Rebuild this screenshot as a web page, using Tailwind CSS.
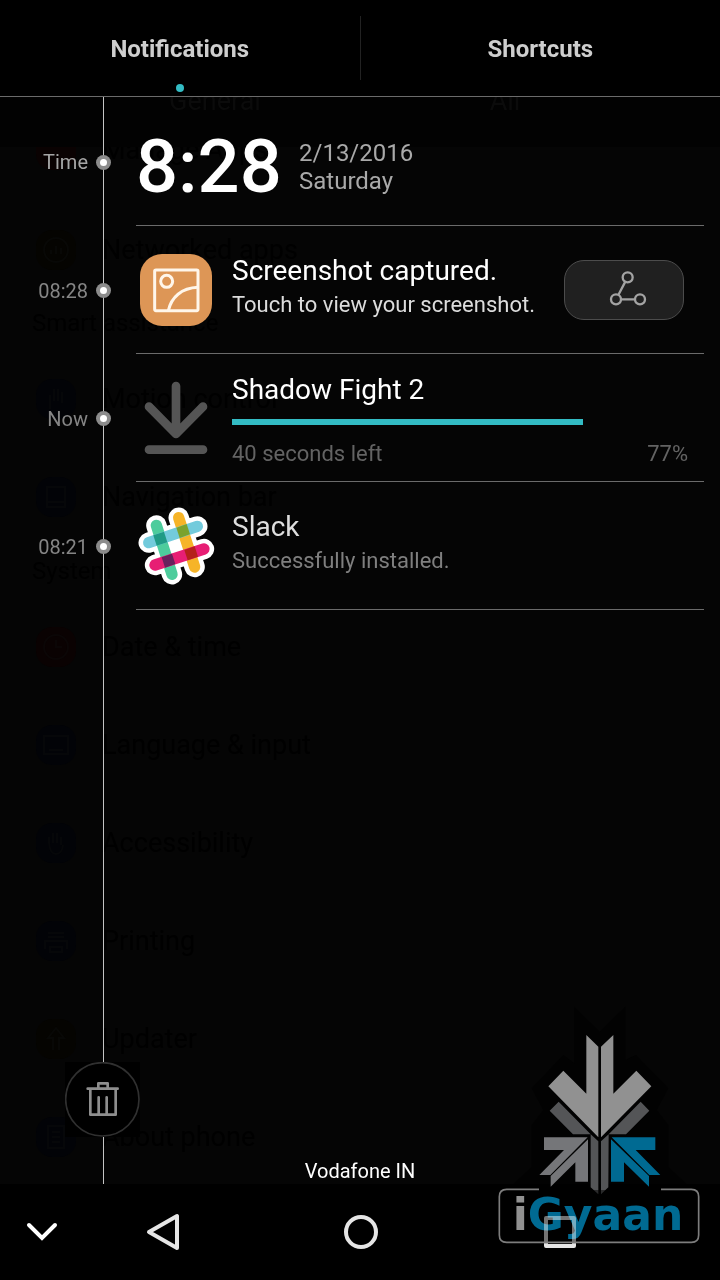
<!DOCTYPE html>
<html lang="en">
<head>
  <meta charset="UTF-8" />
  <meta name="viewport" content="width=device-width, initial-scale=1.0"/>
  <title>Notifications</title>
  <script src="https://cdn.jsdelivr.net/npm/@tailwindcss/browser@4"></script>
</head>
<body class="bg-black font-[Roboto,sans-serif] text-white">
  <div class="relative flex min-h-screen flex-col overflow-hidden">

    <!-- Tabs -->
    <header class="flex h-[97px] border-b border-[#6b6b6b] text-2xl font-bold text-[#cecece]">
      <button type="button" class="relative flex-1 pt-0.5 text-center">
        Notifications
        <span class="absolute bottom-1 left-1/2 size-2 -translate-x-1/2 rounded-full bg-[#33bcc4]"></span>
      </button>
      <div class="my-4 w-px bg-[#222]"></div>
      <button type="button" class="flex-1 pt-0.5 text-center">Shortcuts</button>
    </header>

    <main class="relative flex flex-1 flex-col bg-[#050505]">

      <!-- Dimmed settings list behind the shade -->
      <div class="absolute inset-0 overflow-hidden text-[27px] text-black" aria-hidden="true">
        <div class="flex h-[50px] items-end overflow-hidden bg-[#020202] text-[#0b0b0b]">
          <div class="flex h-[92px] w-full shrink-0 items-center pl-[70px] text-center">
            <span class="w-[290px]">General</span>
            <span class="w-[290px]">All</span>
          </div>
        </div>
        <div class="flex h-[52px] items-end overflow-hidden">
          <div class="flex h-[98px] shrink-0 items-center gap-[26px] pl-9">
            <span class="size-10 rounded-2xl bg-[#0a0202]"></span>Manage Apps
          </div>
        </div>
        <div class="flex h-[98px] items-center gap-[26px] pt-1 pl-9">
          <svg class="size-10 rounded-2xl bg-[#050401]" viewBox="0 0 40 40" fill="none" stroke="#080806" stroke-width="2"><circle cx="20" cy="20" r="12"/><path d="M15 24V20M20 24V16M25 24V18"/></svg>
          Networked apps
        </div>
        <div class="flex h-[52px] items-center pl-8 text-2xl">Smart assistance</div>
        <div class="flex h-[98px] items-center gap-[26px] pt-0.5 pl-9">
          <svg class="size-10 rounded-2xl bg-[#020307]" viewBox="0 0 40 40" fill="none" stroke="#060709" stroke-width="2"><path d="M14 30V16M18 22V10M22 22V10M26 24V13"/></svg>
          Motion control
        </div>
        <div class="flex h-[98px] items-center gap-[26px] pt-0.5 pl-9">
          <svg class="size-10 rounded-2xl bg-[#020307]" viewBox="0 0 40 40" fill="none" stroke="#060709" stroke-width="2"><rect x="11" y="10" width="18" height="20"/><path d="M11 25H29"/></svg>
          Navigation bar
        </div>
        <div class="flex h-[52px] items-center pl-8 text-2xl">System</div>
        <div class="flex h-[98px] items-center gap-[26px] pt-0.5 pl-9">
          <svg class="size-10 rounded-2xl bg-[#0a0202]" viewBox="0 0 40 40" fill="none" stroke="#0b0606" stroke-width="2"><circle cx="20" cy="20" r="12"/><path d="M20 13V20H26"/></svg>
          Date &amp; time
        </div>
        <div class="flex h-[98px] items-center gap-[26px] pt-0.5 pl-9">
          <svg class="size-10 rounded-2xl bg-[#020307]" viewBox="0 0 40 40" fill="none" stroke="#060709" stroke-width="2"><rect x="8" y="11" width="24" height="18"/><path d="M13 25H27"/></svg>
          Language &amp; input
        </div>
        <div class="flex h-[98px] items-center gap-[26px] pt-0.5 pl-9">
          <svg class="size-10 rounded-2xl bg-[#020307]" viewBox="0 0 40 40" fill="none" stroke="#060709" stroke-width="2"><path d="M13 20V14M17 20V10M21 20V10M25 22V14M13 20Q14 31 20 31T27 22"/></svg>
          Accessibility
        </div>
        <div class="flex h-[98px] items-center gap-[26px] pt-0.5 pl-9">
          <svg class="size-10 rounded-2xl bg-[#020307]" viewBox="0 0 40 40" fill="none" stroke="#060709" stroke-width="2"><path d="M12 12H28M12 16H28M9 28V20H31V28M14 26H26V31H14Z"/></svg>
          Printing
        </div>
        <div class="flex h-[98px] items-center gap-[26px] pt-0.5 pl-9">
          <svg class="size-10 rounded-2xl bg-[#050401]" viewBox="0 0 40 40" fill="none" stroke="#080806" stroke-width="2"><path d="M17 31V19H12L20 9L28 19H23V31"/></svg>
          Updater
        </div>
        <div class="flex h-[98px] items-center gap-[26px] pt-0.5 pl-9">
          <svg class="size-10 rounded-2xl bg-[#020307]" viewBox="0 0 40 40" fill="none" stroke="#060709" stroke-width="2"><rect x="12" y="9" width="16" height="22"/><path d="M16 15H24M16 20H24M16 25H24"/></svg>
          About phone
        </div>
      </div>

      <!-- Timeline line -->
      <div class="absolute inset-y-0 left-[103px] w-px bg-[#c4c4c4]"></div>

      <ul class="relative flex flex-col pt-px pr-4">
        <li class="flex h-32 items-center">
          <span class="w-[88px] text-right text-xl text-[#a5a5a5]">Time</span>
          <span class="mx-2 flex size-[15px] items-center justify-center rounded-full bg-[#8c8c8c]"><span class="size-[7px] rounded-full bg-white"></span></span>
          <div class="ml-[17px] flex h-full flex-1 items-center border-b border-[#6b6b6b] pt-2.5">
            <time class="w-[163px] text-[74px] leading-none font-medium">8:28</time>
            <p class="text-2xl leading-7 text-[#a9a9a9]">2/13/2016<br>Saturday</p>
          </div>
        </li>

        <li class="flex h-32 items-center">
          <span class="w-[88px] pt-0.5 text-right text-xl text-[#858585]">08:28</span>
          <span class="mx-2 flex size-[15px] items-center justify-center rounded-full bg-[#8c8c8c]"><span class="size-[7px] rounded-full bg-white"></span></span>
          <div class="ml-[17px] flex h-full flex-1 items-center border-b border-[#6b6b6b]">
            <div class="mr-4 flex w-20 justify-center">
              <svg class="size-[72px] rounded-[22px] bg-[#dd9656]" viewBox="0 0 216 216" fill="none" stroke="#fff6ea" stroke-width="9">
                <rect x="44" y="48" width="130" height="122" rx="4"/>
                <circle cx="80" cy="82" r="18"/>
                <path d="M85 170C94 130 124 102 174 100"/>
              </svg>
            </div>
            <div class="flex-1 pb-1.5">
              <h2 class="text-[28px] leading-9">Screenshot captured.</h2>
              <p class="text-[22px] leading-8 text-[#dcdcdc]">Touch to view your screenshot.</p>
            </div>
            <button type="button" aria-label="Share" class="mr-5 h-[60px] w-[120px] overflow-hidden rounded-[20px] border border-[#4c4c4c] bg-[#202020]">
              <svg class="size-full" viewBox="615 123 354 174" fill="none" stroke="#a3a3a3" stroke-width="7">
                <circle cx="803" cy="172" r="15"/>
                <circle cx="768" cy="238" r="15"/>
                <circle cx="840" cy="238" r="15"/>
                <path d="M796 185L775 225M783 238H825"/>
              </svg>
            </button>
          </div>
        </li>

        <li class="flex h-32 items-center">
          <span class="w-[88px] pt-0.5 text-right text-xl text-[#858585]">Now</span>
          <span class="mx-2 flex size-[15px] items-center justify-center rounded-full bg-[#8c8c8c]"><span class="size-[7px] rounded-full bg-white"></span></span>
          <div class="ml-[17px] flex h-full flex-1 items-center border-b border-[#6b6b6b]">
            <div class="mr-4 flex w-20 justify-center">
              <svg class="h-[74px] w-16" viewBox="432 483 192 222" fill="none" stroke="#555" stroke-width="26" stroke-linecap="round" stroke-linejoin="round">
                <path d="M528 498V638M447 560L528 642L609 560M447 689H609"/>
              </svg>
            </div>
            <div class="mr-4 flex-1 pt-1.5">
              <h2 class="text-[28px] leading-9">Shadow Fight 2</h2>
              <div class="mt-[11px] mb-[13px]" role="progressbar" aria-label="Download" aria-valuenow="77" aria-valuemin="0" aria-valuemax="100">
                <div class="h-1.5 bg-[#33bcc4]" style="width: 77%"></div>
              </div>
              <p class="flex justify-between text-[22px] leading-8 text-[#636363]"><span>40 seconds left</span><span>77%</span></p>
            </div>
          </div>
        </li>

        <li class="flex h-32 items-center">
          <span class="w-[88px] pt-0.5 text-right text-xl text-[#858585]">08:21</span>
          <span class="mx-2 flex size-[15px] items-center justify-center rounded-full bg-[#8c8c8c]"><span class="size-[7px] rounded-full bg-white"></span></span>
          <div class="ml-[17px] flex h-full flex-1 items-center border-b border-[#6b6b6b]">
            <div class="mr-4 flex w-20 justify-center">
              <svg class="size-[78px]" viewBox="22 22 234 234" fill="none" stroke-linecap="round">
                <path stroke="#fff" stroke-width="61" d="M80 77L127 224M147 54L195 202M57 129L203 80M76 196L223 148"/>
                <path fill="#fff" d="M92 115L160 94L184 161L116 183Z"/>
                <g stroke-width="34">
                  <path stroke="#4dcc9c" d="M80 77L127 224"/>
                  <path stroke="#f6b428" d="M147 54L195 202"/>
                  <path stroke="#73cbdc" d="M57 129L203 80"/>
                  <path stroke="#e71e74" d="M76 196L223 148"/>
                </g>
                <path fill="#209b86" d="M71 107L103 96L113 128L81 138Z"/>
                <path fill="#7ba22d" d="M140 84L171 73L181 104L150 115Z"/>
                <path fill="#69205c" d="M96 173L127 162L137 193L106 204Z"/>
                <path fill="#b5201a" d="M164 151L195 140L205 171L174 182Z"/>
              </svg>
            </div>
            <div class="flex-1 pb-1.5">
              <h2 class="text-[28px] leading-9 text-[#dedede]">Slack</h2>
              <p class="text-[22px] leading-8 text-[#7f7f7f]">Successfully installed.</p>
            </div>
          </div>
        </li>
      </ul>

      <!-- Clear all + carrier -->
      <div class="relative mt-auto flex flex-col">
        <button type="button" aria-label="Clear all" class="ml-[65px] size-[75px] bg-black">
          <svg class="size-full" viewBox="195 66 225 225" fill="none" stroke="#8e8e8e" stroke-width="8" stroke-linejoin="round" stroke-linecap="round">
            <circle cx="307" cy="178" r="110" stroke="#303030" stroke-width="5"/>
            <path d="M263 146H353M295 144V130H323V144M271 148V224H347V148M296 172V220M320 172V220"/>
          </svg>
        </button>
        <p class="mt-[22px] text-center text-xl leading-[25px]">Vodafone IN</p>
      </div>
    </main>

    <!-- Navigation bar -->
    <nav class="grid h-24 grid-cols-[84fr_158fr_238fr_160fr_80fr] bg-black">
      <button type="button" aria-label="Hide" class="flex items-center justify-center">
        <svg class="h-6 w-9" viewBox="0 0 36 24" fill="none" stroke="#fff" stroke-width="4" stroke-linecap="round"><path d="M5 5L18 18L31 5"/></svg>
      </button>
      <button type="button" aria-label="Back" class="flex items-center justify-center">
        <svg class="size-10" viewBox="0 0 40 40" fill="none" stroke="#e6e6e6" stroke-width="4" stroke-linejoin="round"><path d="M6 20L34 4V36Z"/></svg>
      </button>
      <button type="button" aria-label="Home" class="flex items-center justify-center">
        <svg class="size-10" viewBox="0 0 40 40" fill="none" stroke="#e6e6e6" stroke-width="4"><circle cx="20" cy="20" r="15"/></svg>
      </button>
      <button type="button" aria-label="Recent apps" class="flex items-center justify-center">
        <svg class="size-10" viewBox="0 0 40 40" fill="none" stroke="#e6e6e6" stroke-width="4" stroke-linejoin="round"><path d="M6 6H34V34H6Z"/></svg>
      </button>
    </nav>

    <!-- iGyaan watermark -->
    <svg class="pointer-events-none absolute right-0 bottom-0 h-[280px] w-60" viewBox="0 0 720 840">
      <path fill="#020202" d="M283 20L359 95L436 20V180L468 165L565 265L530 330L565 375V500L620 553H100L155 500V375L190 330L155 265L250 165L283 190Z"/>
      <path fill="#919191" d="M319 105L355 140V412L205 259L250 212L319 281ZM400 105L363 140V412L514 259L469 212L400 281Z"/>
      <path fill="#545557" d="M236 305L332 403H279L209 332ZM482 305L508 332L438 403H386ZM332 403L355 424V583L332 562ZM386 403L363 424V583L385 562Z"/>
      <path fill="#757679" d="M192 412H323L211 525H178L252 450H192ZM324 418V545H286V487L212 560V528Z"/>
      <path fill="#006a92" d="M526 412H395L508 525H541L467 450H526ZM393 418V545H432V487L507 560V528Z"/>
      <rect x="60" y="570" width="596" height="160" rx="22" fill="#000" fill-opacity=".5"/>
      <path fill="none" stroke="#7d7d7d" stroke-width="5" d="M177 568H80Q58 568 58 590V705Q58 727 80 727H634Q656 727 656 705V590Q656 568 634 568H543"/>
      <text x="98" y="690" class="fill-[#006a92] font-['DejaVu_Sans'] text-[132px] font-bold mix-blend-screen"><tspan class="fill-[#919191]">i</tspan>Gyaan</text>
    </svg>
  </div>
</body>
</html>
